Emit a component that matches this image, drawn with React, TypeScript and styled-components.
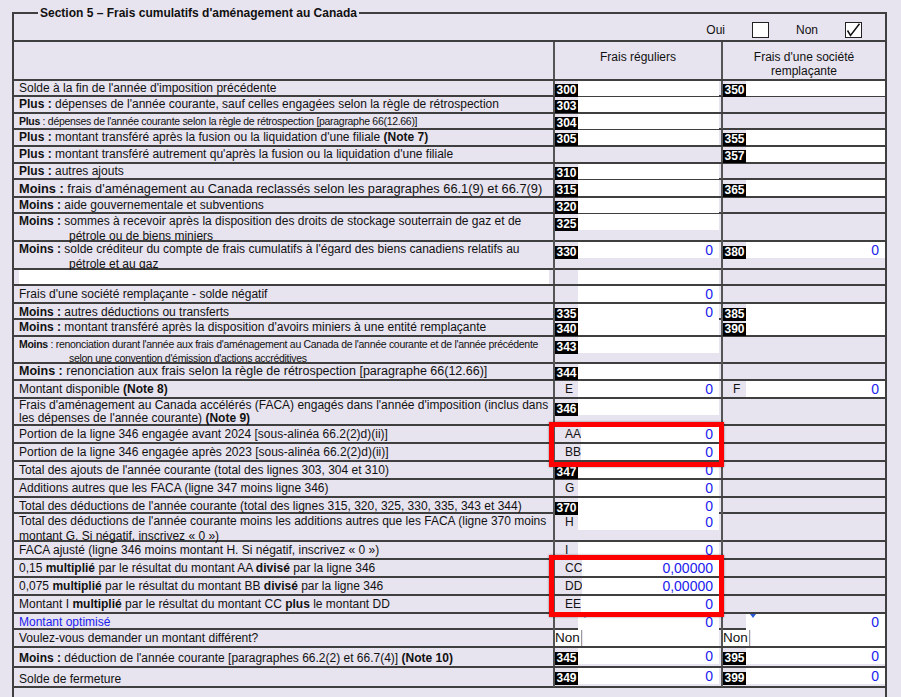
import React from "react";
import styled, { createGlobalStyle, css } from "styled-components";

const BG = "#e7e3ef";
const LINE = "#3f3f3f";
const VLINE = "#555555";
const BLUE = "#2020ee";

const GlobalStyle = createGlobalStyle`
  html, body { margin: 0; padding: 0; overflow: hidden; background: ${BG}; }
  body { font-family: "Liberation Sans", Arial, sans-serif; font-size: 12px; color: #111; }
  *, *::before, *::after { box-sizing: border-box; }
`;

const Page = styled.div`
  padding: 6px 0 0 12px;
`;

const Frame = styled.fieldset`
  margin: 0;
  padding: 0;
  width: 875px;
  min-inline-size: 0;
  border: 2px solid ${LINE};
`;

const Legend = styled.legend`
  margin-left: 24px;
  padding: 0 2px;
  font-weight: bold;
  font-size: 12px;
  line-height: 14px;
  color: #111;
`;

const ChoiceRow = styled.div`
  display: flex;
  justify-content: flex-end;
  align-items: center;
  gap: 27px;
  height: 22px;
  padding-right: 23px;
  border-bottom: 2px solid ${LINE};
`;

const CheckBox = styled.span`
  display: inline-flex;
  width: 17px;
  height: 16px;
  background: #fff;
  border: 1px solid #222;
  align-items: center;
  justify-content: center;
`;

const Row = styled.div<{ $h: number }>`
  display: grid;
  grid-template-columns: 541px 168px 162px;
  height: ${(p) => p.$h}px;
  border-bottom: 2px solid ${LINE};
`;

const HeadCell = styled.div<{ $divider?: boolean }>`
  text-align: center;
  padding-top: 8px;
  line-height: 14px;
  border-right: ${(p) => (p.$divider ? `2px solid ${VLINE}` : "none")};
`;

const Label = styled.div<{
  $size?: number;
  $narrow?: boolean;
  $lh?: number;
  $hang?: boolean;
  $blue?: boolean;
  $drop?: number;
}>`
  display: flex;
  align-items: center;
  padding: ${(p) => p.$drop ?? 0}px 3px 0 ${(p) => (p.$hang ? 55 : 5)}px;
  border-right: 2px solid ${VLINE};
  font-size: ${(p) => p.$size ?? 12}px;
  letter-spacing: ${(p) => (p.$narrow ? "-0.3px" : "normal")};
  line-height: ${(p) => p.$lh ?? 15}px;
  color: ${(p) => (p.$blue ? BLUE : "#111")};
  text-indent: ${(p) => (p.$hang ? "-50px" : "0")};
  white-space: nowrap;
`;

const LabelText = styled.div``;

const WhiteBar = styled.div`
  flex: 1;
  height: 100%;
  background: #fff;
  margin-right: 1px;
`;

const FieldCell = styled.div<{ $divider?: boolean }>`
  display: flex;
  align-items: flex-start;
  min-width: 0;
  padding-right: ${(p) => (p.$divider ? 2 : 0)}px;
  border-right: ${(p) => (p.$divider ? `2px solid ${VLINE}` : "none")};
`;

const Field = styled.div`
  display: flex;
  flex: 1;
  height: 100%;
  max-height: 16px;
  min-width: 0;
`;

const Slot = styled.div`
  flex: none;
  min-width: 23px;
  display: flex;
  align-items: flex-end;
`;

const Code = styled.span`
  display: block;
  width: 23px;
  height: 13px;
  margin-bottom: -1px;
  background: #000;
  color: #fff;
  font-weight: bold;
  font-size: 12px;
  line-height: 13px;
  text-align: center;
  position: relative;
  z-index: 1;
`;

const Letter = styled.span`
  align-self: center;
  padding-left: 10px;
  font-size: 12px;
  line-height: 16px;
  color: #111;
`;

const Input = styled.div<{ $marker?: boolean }>`
  position: relative;
  flex: 1;
  height: 100%;
  background: #fff;
  text-align: right;
  padding-right: 6px;
  color: ${BLUE};
  font-size: 14px;
  line-height: 16px;
  white-space: nowrap;
  ${(p) =>
    p.$marker &&
    css`
      &::before {
        content: "";
        position: absolute;
        left: 4px;
        top: 0;
        border-left: 3px solid transparent;
        border-right: 3px solid transparent;
        border-top: 4px solid #2a5bd7;
      }
    `}
`;

const Select = styled.div`
  flex: none;
  width: 27px;
  height: 100%;
  background: #fff;
  color: #111;
  font-size: 13.5px;
  line-height: 16px;
  overflow: hidden;
  white-space: nowrap;
  border-right: 1px solid #9a9a9a;
  margin-right: 1px;
`;

const Highlight = styled.div<{ $top: number; $bottom: number }>`
  position: relative;
  &::after {
    content: "";
    position: absolute;
    left: 535px;
    width: 175px;
    top: ${(p) => p.$top}px;
    bottom: ${(p) => p.$bottom}px;
    border: 5px solid #ff0000;
    box-shadow: 0 0 2px rgba(0, 0, 0, 0.45);
    pointer-events: none;
    z-index: 2;
  }
`;

const Filler = styled.div`
  height: 40px;
`;

type F = {
  code?: string;
  letter?: string;
  value?: string;
  noInput?: boolean;
  select?: boolean;
  marker?: boolean;
};

const FieldBox = ({ f, divider }: { f?: F; divider?: boolean }) => (
  <FieldCell $divider={divider}>
    {f && (
      <Field>
        {f.select ? (
          <Select>Non</Select>
        ) : (
          <Slot>
            {f.code ? <Code>{f.code}</Code> : f.letter ? <Letter>{f.letter}</Letter> : null}
          </Slot>
        )}
        {!f.noInput && <Input $marker={f.marker}>{f.value}</Input>}
      </Field>
    )}
  </FieldCell>
);

type RowProps = {
  h: number;
  children?: React.ReactNode;
  size?: number;
  narrow?: boolean;
  lh?: number;
  hang?: boolean;
  blue?: boolean;
  drop?: number;
  c2?: F;
  c3?: F;
};

const FormRow = ({ h, children, size, narrow, lh, hang, blue, drop, c2, c3 }: RowProps) => (
  <Row $h={h}>
    <Label $size={size} $narrow={narrow} $lh={lh} $hang={hang} $blue={blue} $drop={drop}>
      <LabelText>{children}</LabelText>
    </Label>
    <FieldBox f={c2} divider />
    <FieldBox f={c3} />
  </Row>
);

const CheckMark = () => (
  <svg width="15" height="14" viewBox="0 0 15 14">
    <path d="M1.5 7.5 L4.5 12.5 L13.5 0.8" fill="none" stroke="#111" strokeWidth="1.5" />
  </svg>
);

export default function App() {
  return (
    <>
      <GlobalStyle />
      <Page>
        <Frame>
          <Legend>Section 5 – Frais cumulatifs d'aménagement au Canada</Legend>
          <ChoiceRow>
            <span>Oui</span>
            <CheckBox />
            <span>Non</span>
            <CheckBox>
              <CheckMark />
            </CheckBox>
          </ChoiceRow>
          <Row $h={39}>
            <HeadCell $divider />
            <HeadCell $divider>Frais réguliers</HeadCell>
            <HeadCell>
              Frais d'une société
              <br />
              remplaçante
            </HeadCell>
          </Row>

          <FormRow h={16} c2={{ code: "300" }} c3={{ code: "350" }}>
            Solde à la fin de l'année d'imposition précédente
          </FormRow>
          <FormRow h={17} c2={{ code: "303" }}>
            <b>Plus :</b> dépenses de l'année courante, sauf celles engagées selon la règle de rétrospection
          </FormRow>
          <FormRow h={16} size={10.5} narrow c2={{ code: "304" }}>
            <b>Plus</b> : dépenses de l'année courante selon la règle de rétrospection [paragraphe 66(12.66)]
          </FormRow>
          <FormRow h={17} c2={{ code: "305" }} c3={{ code: "355" }}>
            <b>Plus :</b> montant transféré après la fusion ou la liquidation d'une filiale <b>(Note 7)</b>
          </FormRow>
          <FormRow h={17} c3={{ code: "357" }}>
            <b>Plus :</b> montant transféré autrement qu'après la fusion ou la liquidation d'une filiale
          </FormRow>
          <FormRow h={16} c2={{ code: "310" }}>
            <b>Plus :</b> autres ajouts
          </FormRow>
          <FormRow h={18} size={12.8} c2={{ code: "315" }} c3={{ code: "365" }}>
            <b>Moins :</b> frais d'aménagement au Canada reclassés selon les paragraphes 66.1(9) et 66.7(9)
          </FormRow>
          <FormRow h={16} c2={{ code: "320" }}>
            <b>Moins :</b> aide gouvernementale et subventions
          </FormRow>
          <FormRow h={28} hang c2={{ code: "325" }}>
            <b>Moins :</b> sommes à recevoir après la disposition des droits de stockage souterrain de gaz et de
            <br />
            pétrole ou de biens miniers
          </FormRow>
          <FormRow h={28} hang c2={{ code: "330", value: "0" }} c3={{ code: "380", value: "0" }}>
            <b>Moins :</b> solde créditeur du compte de frais cumulatifs à l'égard des biens canadiens relatifs au
            <br />
            pétrole et au gaz
          </FormRow>
          <Row $h={16}>
            <Label>
              <WhiteBar />
            </Label>
            <FieldBox f={{}} divider />
            <FieldBox />
          </Row>
          <FormRow h={18} c2={{ value: "0" }}>
            Frais d'une société remplaçante - solde négatif
          </FormRow>
          <FormRow h={16} c2={{ code: "335", value: "0" }} c3={{ code: "385" }}>
            <b>Moins :</b> autres déductions ou transferts
          </FormRow>
          <FormRow h={17} c2={{ code: "340" }} c3={{ code: "390" }}>
            <b>Moins :</b> montant transféré après la disposition d'avoirs miniers à une entité remplaçante
          </FormRow>
          <FormRow h={27} size={10.5} narrow lh={14} hang c2={{ code: "343" }}>
            <b>Moins</b> : renonciation durant l'année aux frais d'aménagement au Canada de l'année courante et de
            l'année précédente
            <br />
            selon une convention d'émission d'actions accréditives
          </FormRow>
          <FormRow h={17} size={12.5} c2={{ code: "344" }}>
            <b>Moins :</b> renonciation aux frais selon la règle de rétrospection [paragraphe 66(12.66)]
          </FormRow>
          <FormRow h={18} c2={{ letter: "E", value: "0" }} c3={{ letter: "F", value: "0" }}>
            Montant disponible <b>(Note 8)</b>
          </FormRow>
          <FormRow h={27} lh={13} c2={{ code: "346" }}>
            Frais d'aménagement au Canada accélérés (FACA) engagés dans l'année d'imposition (inclus dans
            <br />
            les dépenses de l'année courante) <b>(Note 9)</b>
          </FormRow>
          <Highlight $top={-4} $bottom={-5}>
            <FormRow h={18} c2={{ letter: "AA", value: "0" }}>
              Portion de la ligne 346 engagée avant 2024 [sous-alinéa 66.2(2)d)(ii)]
            </FormRow>
            <FormRow h={18} c2={{ letter: "BB", value: "0" }}>
              Portion de la ligne 346 engagée après 2023 [sous-alinéa 66.2(2)d)(ii)]
            </FormRow>
          </Highlight>
          <FormRow h={18} c2={{ code: "347", value: "0" }}>
            Total des ajouts de l'année courante (total des lignes 303, 304 et 310)
          </FormRow>
          <FormRow h={18} c2={{ letter: "G", value: "0" }}>
            Additions autres que les FACA (ligne 347 moins ligne 346)
          </FormRow>
          <FormRow h={16} c2={{ code: "370", value: "0" }}>
            Total des déductions de l'année courante (total des lignes 315, 320, 325, 330, 335, 343 et 344)
          </FormRow>
          <FormRow h={28} c2={{ letter: "H", value: "0" }}>
            Total des déductions de l'année courante moins les additions autres que les FACA (ligne 370 moins
            <br />
            montant G. Si négatif, inscrivez « 0 »)
          </FormRow>
          <FormRow h={18} c2={{ letter: "I", value: "0" }}>
            FACA ajusté (ligne 346 moins montant H. Si négatif, inscrivez « 0 »)
          </FormRow>
          <Highlight $top={-5} $bottom={-3}>
            <FormRow h={18} c2={{ letter: "CC", value: "0,00000" }}>
              0,15 <b>multiplié</b> par le résultat du montant AA <b>divisé</b> par la ligne 346
            </FormRow>
            <FormRow h={18} c2={{ letter: "DD", value: "0,00000" }}>
              0,075 <b>multiplié</b> par le résultat du montant BB <b>divisé</b> par la ligne 346
            </FormRow>
            <FormRow h={18} c2={{ letter: "EE", value: "0" }}>
              Montant I <b>multiplié</b> par le résultat du montant CC <b>plus</b> le montant DD
            </FormRow>
          </Highlight>
          <FormRow h={16} blue c2={{ value: "0", marker: true }} c3={{ value: "0", marker: true }}>
            Montant optimisé
          </FormRow>
          <FormRow h={18} c2={{ select: true }} c3={{ select: true }}>
            Voulez-vous demander un montant différent?
          </FormRow>
          <FormRow h={20} drop={2} c2={{ code: "345", value: "0" }} c3={{ code: "395", value: "0" }}>
            <b>Moins :</b> déduction de l'année courante [paragraphes 66.2(2) et 66.7(4)] <b>(Note 10)</b>
          </FormRow>
          <FormRow h={20} drop={4} c2={{ code: "349", value: "0" }} c3={{ code: "399", value: "0" }}>
            Solde de fermeture
          </FormRow>
          <Filler />
        </Frame>
      </Page>
    </>
  );
}
